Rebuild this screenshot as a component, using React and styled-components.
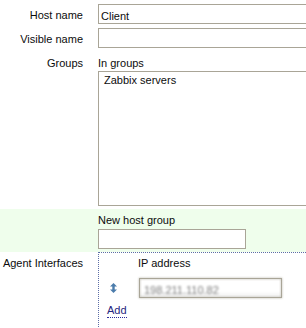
import React from "react";
import styled, { createGlobalStyle } from "styled-components";

const Global = createGlobalStyle`
  html, body { margin: 0; padding: 0; background: #fff; }
  body {
    font-family: "Liberation Sans", Arial, sans-serif;
    font-size: 11px;
    line-height: 13px;
    color: #0c0c0c;
  }
`;

const Form = styled.div`
  width: 306px;
  height: 328px;
  overflow: hidden;
`;

const Row = styled.div`
  display: grid;
  grid-template-columns: 98px minmax(0, 1fr);
  background: ${(p) => (p.$new ? "#effeec" : "transparent")};
  padding-top: ${(p) => p.$top || 0}px;
  padding-bottom: ${(p) => p.$bottom || 0}px;
`;

const Label = styled.div`
  text-align: right;
  padding-right: 15px;
  padding-top: ${(p) => p.$top || 0}px;
  white-space: nowrap;
`;

const Field = styled.div`
  display: flex;
  flex-direction: column;
  align-items: flex-start;
  min-width: 0;
`;

const TextInput = styled.input`
  box-sizing: border-box;
  height: 20px;
  width: ${(p) => p.$w}px;
  flex-shrink: 0;
  margin: ${(p) => p.$mt || 0}px 0 0 ${(p) => p.$ml || 0}px;
  padding: 3px 2px 0;
  border: 1px solid #a9a597;
  border-radius: 0;
  background: #fff;
  font-family: "Liberation Sans", Arial, sans-serif;
  font-size: 11px;
  color: #0c0c0c;
  outline: none;
`;

const Caption = styled.div`
  white-space: nowrap;
  margin-left: ${(p) => p.$ml || 0}px;
`;

const ListBox = styled.div`
  box-sizing: border-box;
  margin-top: 1px;
  width: 260px;
  height: 135px;
  flex-shrink: 0;
  border: 1px solid #a9a597;
  padding: 2px 5px;
  background: #fff;
  white-space: nowrap;
`;

const InterfaceCell = styled.div`
  border-top: 1px dotted #5d6ea6;
  border-left: 1px dotted #5d6ea6;
  padding-top: 4px;
  min-height: 90px;
  display: flex;
  flex-direction: column;
`;

const InterfaceRow = styled.div`
  display: flex;
  align-items: center;
  margin-top: 8px;
`;

const HandleCell = styled.div`
  width: 39px;
  box-sizing: border-box;
  padding-left: 11px;
  display: flex;
  align-items: center;
`;

const BlurredIp = styled.input`
  box-sizing: border-box;
  height: 20px;
  width: 143px;
  margin-left: 1px;
  padding: 3px 4px 0;
  border: 1px solid #a9a597;
  border-radius: 0;
  background: linear-gradient(#fff, #fff 70%, #f0f0f0);
  font-family: "Liberation Sans", Arial, sans-serif;
  font-size: 11px;
  color: #7c7c7c;
  filter: blur(1px);
  outline: none;
`;

const IpWrap = styled.div`
  position: relative;
  height: 20px;
  width: 144px;
  &::after {
    content: "";
    position: absolute;
    left: 1px; top: 0; right: 0; bottom: 0;
    border: 1px solid #a9a597;
    pointer-events: none;
  }
`;

const AddLink = styled.a`
  align-self: flex-start;
  margin: 6px 0 0 8px;
  color: #25257e;
  text-decoration: none;
  border-bottom: 1px dotted #2a2a9a;
  line-height: 13px;
  cursor: pointer;
`;

const Handle = () => (
  <svg width="7" height="10" viewBox="0 0 7 10" aria-hidden="true">
    <polygon points="3.5,0 7,3.6 0,3.6" fill="#4b7cab" />
    <rect x="2.3" y="3" width="2.4" height="4" fill="#4b7cab" />
    <polygon points="0,6.4 7,6.4 3.5,10" fill="#4b7cab" />
  </svg>
);

export default function App() {
  return (
    <>
      <Global />
      <Form>
        <Row $top={4}>
          <Label $top={5}>Host name</Label>
          <Field>
            <TextInput $w={260} defaultValue="Client" />
          </Field>
        </Row>
        <Row $top={4}>
          <Label $top={5}>Visible name</Label>
          <Field>
            <TextInput $w={260} defaultValue="" />
          </Field>
        </Row>
        <Row $top={9} $bottom={3}>
          <Label>Groups</Label>
          <Field>
            <Caption>In groups</Caption>
            <ListBox>Zabbix servers</ListBox>
          </Field>
        </Row>
        <Row $new $top={5} $bottom={3}>
          <Label />
          <Field>
            <Caption>New host group</Caption>
            <TextInput $w={148} $mt={2} defaultValue="" />
          </Field>
        </Row>
        <Row>
          <Label $top={5}>Agent Interfaces</Label>
          <InterfaceCell>
            <Caption $ml={39}>IP address</Caption>
            <InterfaceRow>
              <HandleCell>
                <Handle />
              </HandleCell>
              <IpWrap>
                <BlurredIp defaultValue="198.211.110.82" />
              </IpWrap>
            </InterfaceRow>
            <AddLink>Add</AddLink>
          </InterfaceCell>
        </Row>
      </Form>
    </>
  );
}
